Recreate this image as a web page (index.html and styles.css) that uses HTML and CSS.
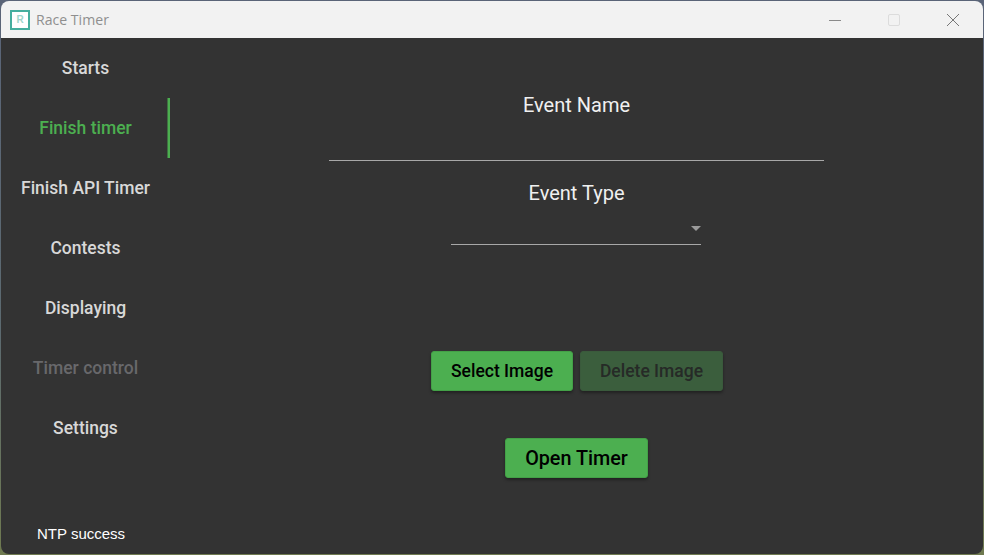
FILE: index.html
```html
<!DOCTYPE html>
<html lang="en">
<head>
<meta charset="utf-8">
<title>Race Timer</title>
<link rel="stylesheet" href="styles.css">
</head>
<body>
<div class="window">
  <header class="titlebar">
    <div class="app-title">
      <span class="app-icon">R</span>
      <span class="app-name">Race Timer</span>
    </div>
    <div class="controls">
      <span class="control"><svg width="14" height="14" viewBox="0 0 14 14"><path d="M1 7.5h12" stroke="#8a8a8a" stroke-width="1" fill="none"/></svg></span>
      <span class="control"><svg width="14" height="14" viewBox="0 0 14 14"><rect x="1.5" y="1.5" width="11" height="11" rx="1.5" stroke="#dcdcdc" stroke-width="1" fill="none"/></svg></span>
      <span class="control"><svg width="14" height="14" viewBox="0 0 14 14"><path d="M1 1l12 12M13 1L1 13" stroke="#777" stroke-width="1" fill="none"/></svg></span>
    </div>
  </header>
  <div class="body">
    <nav class="sidebar">
      <div class="nav-list">
        <a class="nav-item">Starts</a>
        <a class="nav-item active">Finish timer</a>
        <a class="nav-item">Finish API Timer</a>
        <a class="nav-item">Contests</a>
        <a class="nav-item">Displaying</a>
        <a class="nav-item disabled">Timer control</a>
        <a class="nav-item">Settings</a>
      </div>
      <div class="status">NTP success</div>
    </nav>
    <main class="content">
      <h2 class="label label-name">Event Name</h2>
      <div class="text-field"></div>
      <h2 class="label label-type">Event Type</h2>
      <div class="select"><span class="caret"></span></div>
      <div class="button-row">
        <button class="btn btn-select">Select Image</button>
        <button class="btn btn-disabled">Delete Image</button>
      </div>
      <button class="btn btn-open">Open Timer</button>
    </main>
  </div>
</div>
</body>
</html>
```
FILE: styles.css
```css
* { box-sizing: border-box; }
html, body { height: 100%; }
body {
  margin: 0;
  width: 984px;
  height: 555px;
  overflow: hidden;
  background: linear-gradient(180deg, #5a6478 0%, #5c6a70 60%, #6f7a50 100%);
  font-family: Roboto, "Liberation Sans", sans-serif;
}
.window {
  width: 984px;
  height: 555px;
  padding: 1px;
  display: flex;
  flex-direction: column;
}
.titlebar {
  height: 37px;
  flex: none;
  background: #f2f2f2;
  border-radius: 8px 8px 0 0;
  display: flex;
  align-items: center;
  justify-content: space-between;
}
.app-title { display: flex; align-items: center; padding-left: 9px; gap: 6px; }
.app-icon {
  width: 20px;
  height: 20px;
  border: 2px solid #45ae9e;
  background: #fff;
  color: #9ed6cc;
  font: 700 10px/16px "Liberation Sans", sans-serif;
  text-align: center;
}
.app-name {
  font-family: "Open Sans", "Noto Sans", sans-serif;
  font-size: 14.1px;
  color: #8f8f8f;
  line-height: 20px;
}
.controls { display: flex; padding-right: 1px; }
.control {
  width: 59px;
  height: 37px;
  display: flex;
  align-items: center;
  justify-content: center;
}
.body {
  flex: 1;
  min-height: 0;
  display: flex;
  background: #333333;
  border-radius: 0 0 8px 8px;
}
.sidebar {
  width: 169px;
  flex: none;
  display: flex;
  flex-direction: column;
  justify-content: space-between;
}
.nav-item {
  height: 60px;
  padding-bottom: 1px;
  display: flex;
  align-items: center;
  justify-content: center;
  font-size: 17.5px;
  font-weight: 500;
  color: #d8d8d8;
}
.nav-item.active {
  color: #4caf50;
  box-shadow: inset -2.5px 0 0 #4caf50;
}
.nav-item.disabled { color: #68686b; }
.status {
  font-family: "Liberation Sans", sans-serif;
  font-size: 15px;
  color: #fff;
  padding: 0 0 12px 36px;
  line-height: 17px;
}
.content {
  flex: 1;
  display: flex;
  flex-direction: column;
  align-items: center;
  padding-top: 55px;
}
.label {
  margin: 0;
  font-size: 20px;
  font-weight: 400;
  line-height: 24px;
  color: #f0f0f0;
}
.text-field {
  width: 495px;
  height: 44px;
  border-bottom: 1px solid #a8a8a8;
}
.label-type { margin-top: 20px; }
.select {
  position: relative;
  width: 250px;
  height: 28px;
  margin: 12px 1px 0 0;
  border-bottom: 1px solid #a8a8a8;
}
.caret {
  position: absolute;
  right: 0;
  top: 9px;
  border-left: 5px solid transparent;
  border-right: 5px solid transparent;
  border-top: 5px solid #9a9a9a;
}
.button-row {
  display: flex;
  gap: 7px;
  margin-top: 106px;
}
.btn {
  width: 143px;
  height: 40px;
  padding: 0 0 1px;
  border: 1px solid #43a047;
  border-radius: 3px;
  background: #4caf50;
  color: #000;
  font-family: Roboto, sans-serif;
  font-size: 17.5px;
  font-weight: 500;
  box-shadow: 0 2px 3px rgba(0,0,0,.35);
}
.btn-select { width: 142px; margin-left: 1px; }
.btn-disabled {
  background: #3b5e3d;
  border-color: #3a5a3c;
  color: #262a27;
}
.btn-open {
  margin-top: 47px;
  padding: 0;
  font-size: 19.8px;
}
```
